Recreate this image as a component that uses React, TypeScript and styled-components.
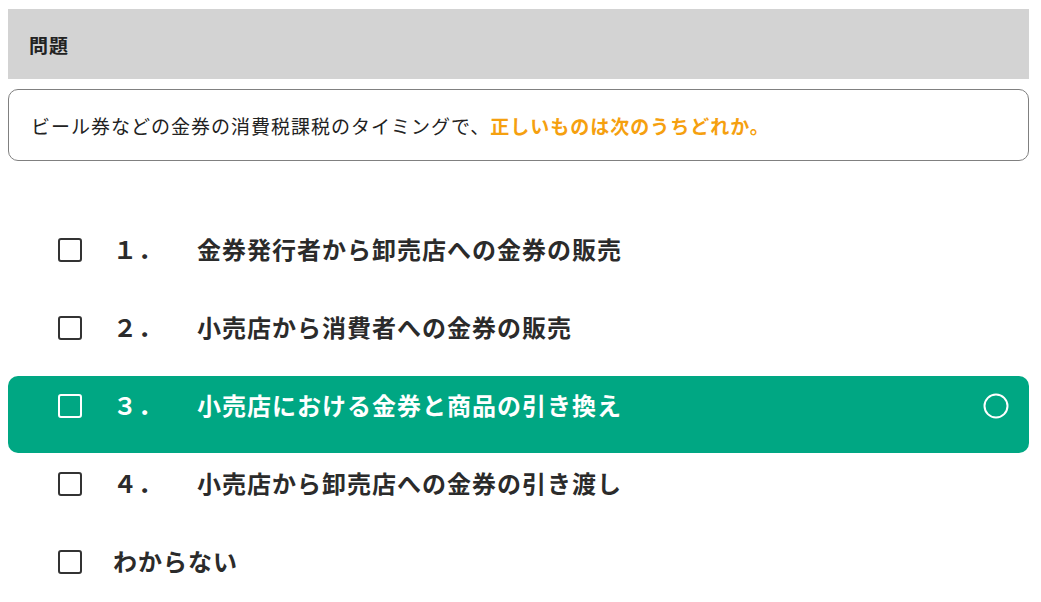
import React from "react";
import styled, { createGlobalStyle } from "styled-components";

const Global = createGlobalStyle`
  html, body { margin: 0; padding: 0; background: #fff; }
  body {
    font-family: "Noto Sans CJK JP", "Noto Sans", sans-serif;
    color: #333;
  }
`;

const Page = styled.div`
  width: 1021px;
  padding: 9px 0 0 8px;
`;

const Header = styled.div`
  height: 70px;
  background: #d3d3d3;
  display: flex;
  align-items: center;
  padding-left: 21px;
  box-sizing: border-box;
  font-size: 19px;
  letter-spacing: 1px;
  font-weight: 700;
  color: #222;
`;

const Question = styled.div`
  margin-top: 10px;
  height: 72px;
  box-sizing: border-box;
  border: 1px solid #808080;
  border-radius: 10px;
  display: flex;
  align-items: center;
  padding: 0 0 0 22px;
  font-size: 19px;
  letter-spacing: 1px;
  color: #222;
`;

const Emph = styled.span`
  color: #f5a00f;
  font-weight: 700;
`;

const List = styled.ul`
  list-style: none;
  margin: 59px 0 0;
  padding: 0;
  display: flex;
  flex-direction: column;
  gap: 1px;
`;

const Row = styled.li<{ $active?: boolean }>`
  height: 77px;
  box-sizing: border-box;
  padding: 11px 20px 0 50px;
  display: flex;
  align-items: flex-start;
  border-radius: 10px;
  background: ${(p) => (p.$active ? "#00a783" : "transparent")};
  color: ${(p) => (p.$active ? "#fff" : "#2b2b2b")};
  font-size: 24px;
  font-weight: 700;
  letter-spacing: 1px;
`;

const Check = styled.span<{ $active?: boolean }>`
  flex: none;
  width: 24px;
  height: 24px;
  margin-top: 7px;
  box-sizing: border-box;
  border: 2px solid ${(p) => (p.$active ? "#fff" : "#333")};
  border-radius: 3px;
  background: transparent;
`;

const Num = styled.span`
  flex: none;
  width: 84px;
  margin-left: 31px;
  line-height: 36px;
  white-space: nowrap;
`;

const Label = styled.span<{ $plain?: boolean }>`
  flex: 1;
  line-height: 36px;
  margin-left: ${(p) => (p.$plain ? "31px" : "0")};
  white-space: nowrap;
`;

const Mark = styled.svg`
  flex: none;
  width: 26px;
  height: 26px;
  margin-top: 6px;
`;

const options = [
  { n: "１．", t: "金券発行者から卸売店への金券の販売" },
  { n: "２．", t: "小売店から消費者への金券の販売" },
  { n: "３．", t: "小売店における金券と商品の引き換え", active: true },
  { n: "４．", t: "小売店から卸売店への金券の引き渡し" },
];

export default function App() {
  return (
    <Page>
      <Global />
      <Header>問題</Header>
      <Question>
        ビール券などの金券の消費税課税のタイミングで、
        <Emph>正しいものは次のうちどれか。</Emph>
      </Question>
      <List>
        {options.map((o) => (
          <Row key={o.n} $active={o.active}>
            <Check $active={o.active} />
            <Num>{o.n}</Num>
            <Label>{o.t}</Label>
            {o.active && (
              <Mark viewBox="0 0 26 26">
                <circle cx="13" cy="13" r="11.5" fill="none" stroke="#fff" strokeWidth="2" />
              </Mark>
            )}
          </Row>
        ))}
        <Row>
          <Check />
          <Label $plain>わからない</Label>
        </Row>
      </List>
    </Page>
  );
}
